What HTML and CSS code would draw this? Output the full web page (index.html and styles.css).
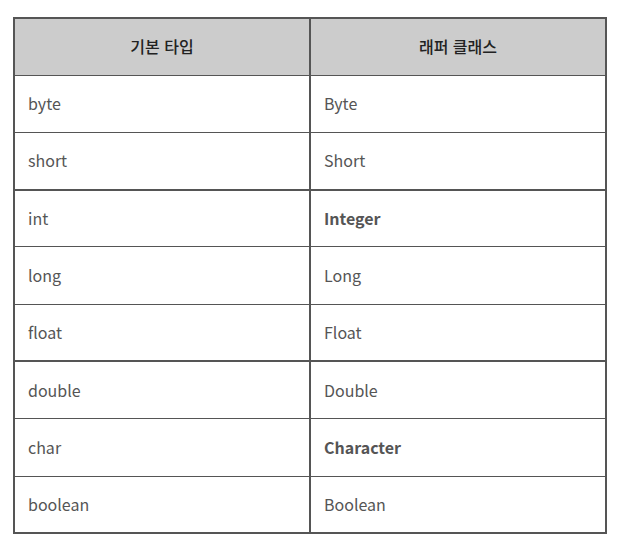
FILE: index.html
```html
<!DOCTYPE html>
<html lang="ko">
<head>
<meta charset="utf-8">
<link rel="stylesheet" href="styles.css">
</head>
<body>
<table class="wrap-table">
  <thead>
    <tr><th>기본 타입</th><th>래퍼 클래스</th></tr>
  </thead>
  <tbody>
    <tr><td>byte</td><td>Byte</td></tr>
    <tr class="thick"><td>short</td><td>Short</td></tr>
    <tr><td>int</td><td class="strong">Integer</td></tr>
    <tr><td>long</td><td>Long</td></tr>
    <tr class="thick"><td>float</td><td>Float</td></tr>
    <tr><td>double</td><td>Double</td></tr>
    <tr><td>char</td><td class="strong">Character</td></tr>
    <tr><td>boolean</td><td>Boolean</td></tr>
  </tbody>
</table>
</body>
</html>
```
FILE: styles.css
```css
html, body {
  margin: 0;
  padding: 0;
  background: #fff;
}
body {
  padding: 17px 0 0 13px;
  font-family: "Noto Sans CJK KR", "Noto Sans", sans-serif;
}
.wrap-table {
  border-collapse: collapse;
  width: 594px;
  table-layout: fixed;
  border: 2px solid #555;
}
.wrap-table th,
.wrap-table td {
  border: 1px solid #555;
  text-align: left;
  font-size: 16px;
  line-height: 22px;
  padding: 0 13px 1px;
  box-sizing: border-box;
}
.wrap-table th:first-child,
.wrap-table td:first-child {
  border-right: 2px solid #555;
}
.wrap-table th {
  background: #ccc;
  color: #222;
  font-weight: 500;
  text-align: center;
  height: 57px;
}
.wrap-table td {
  color: #555;
  font-weight: 400;
  height: 57.3px;
}
.wrap-table tr.thick td {
  border-bottom: 2px solid #555;
}
.wrap-table td.strong {
  font-weight: 600;
}
```
